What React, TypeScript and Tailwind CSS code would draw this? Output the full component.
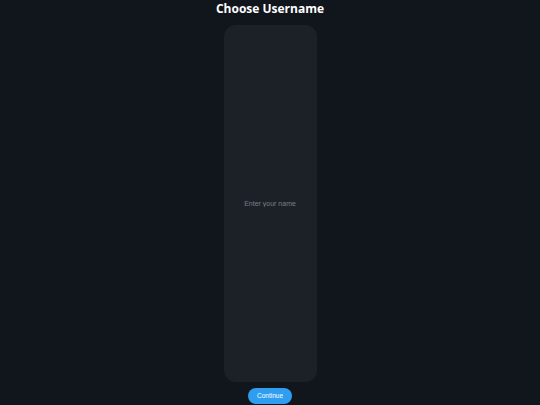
import React, { useState } from 'react';

export default function App() {
  const [name, setName] = useState('');

  return (
    <div className="w-[540px] h-[405px] bg-[#11161d] flex flex-col items-center overflow-hidden">
      <h1 className="mt-[1px] text-[12px] leading-[16px] font-bold text-white font-['Open_Sans',sans-serif]">
        Choose Username
      </h1>
      <input
        type="text"
        value={name}
        onChange={(e) => setName(e.target.value)}
        placeholder="Enter your name"
        className="mt-[8px] w-[93px] h-[357px] rounded-[12px] bg-[#1c2128] text-center text-[7px] text-white placeholder:text-[#7a7f86] outline-none font-['Liberation_Sans',sans-serif]"
      />
      <button className="mt-[6px] w-[44px] h-[16px] rounded-full bg-[#2f9df0] text-white text-[6.5px] font-['Liberation_Sans',sans-serif]">
        Continue
      </button>
    </div>
  );
}
